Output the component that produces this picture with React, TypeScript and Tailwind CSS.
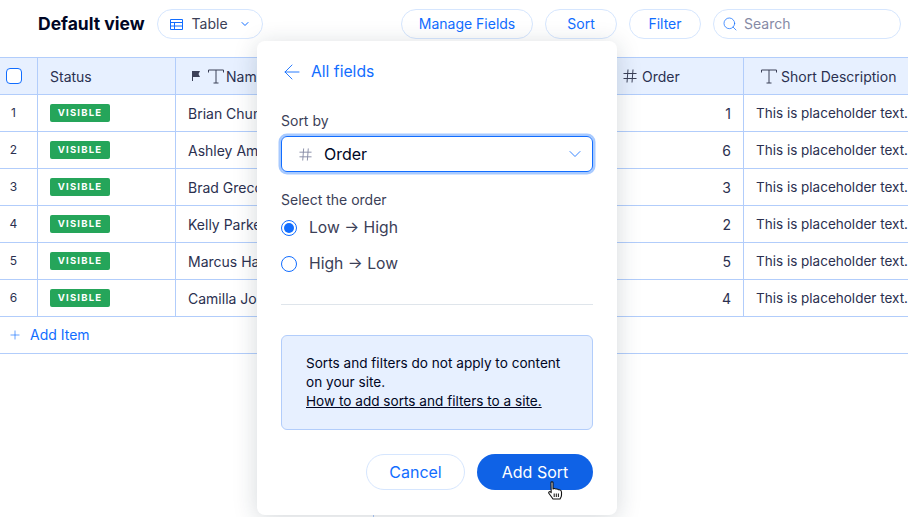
import React from "react";
import { ChevronDown, Search, ArrowLeft, Plus } from "lucide-react";

const rows = [
  ["1", "Brian Chung", "1"],
  ["2", "Ashley Amber", "6"],
  ["3", "Brad Greco", "3"],
  ["4", "Kelly Parker", "2"],
  ["5", "Marcus Hall", "5"],
  ["6", "Camilla Jones", "4"],
];

const font = { fontFamily: "Inter, 'Noto Sans', sans-serif" };

function TIcon() {
  return (
    <svg width="16" height="15" viewBox="0 0 16 15" fill="none" stroke="#3b4057" strokeWidth="1" className="shrink-0">
      <path d="M0.5 3.5V1H15.5V3.5M8 1V14M5.5 14H10.5" />
    </svg>
  );
}

function Hash({ color = "#3b4057", size = 14 }: { color?: string; size?: number }) {
  return (
    <svg width={size} height={size} viewBox="0 0 14 14" fill="none" stroke={color} strokeWidth="1" className="shrink-0">
      <path d="M0.5 4.5H13.5M0.5 9.5H13.5M5 0.5L4 13.5M10 0.5L9 13.5" />
    </svg>
  );
}

function Pill({ children, w }: { children: React.ReactNode; w: string }) {
  return (
    <button className={`${w} h-[30px] pb-[1px] rounded-full border border-[#d6e6fe] bg-white text-[14px] text-[#116dff] flex items-center justify-center`}>
      {children}
    </button>
  );
}

function Row({ n, name, order }: { n: string; name: string; order: string }) {
  return (
    <div className="flex h-[37px] border-b border-[#b2cdfb] text-[14px] text-[#2b3050] bg-white">
      <div className="w-[38px] shrink-0 border-r border-[#b2cdfb] flex items-center text-[12px]">
        <span className="w-[27px] text-center">{n}</span>
      </div>
      <div className="w-[138px] shrink-0 border-r border-[#b2cdfb] flex items-center pl-[12px]">
        <span className="w-[60px] h-[18px] rounded-[2px] bg-[#25a55a] text-white text-[9.5px] font-bold tracking-[1.2px] flex items-center justify-center">VISIBLE</span>
      </div>
      <div className="w-[198px] shrink-0 border-r border-[#b2cdfb] flex items-center pl-[12px] whitespace-nowrap">{name}</div>
      <div className="w-[237px] shrink-0" />
      <div className="w-[133px] shrink-0 border-r border-[#b2cdfb] flex items-center justify-end pr-[12px]">{order}</div>
      <div className="flex-1 flex items-center pl-[12px] text-[13.5px] whitespace-nowrap overflow-hidden">This is placeholder text.</div>
    </div>
  );
}

export default function App() {
  return (
    <div className="relative w-[908px] h-[517px] overflow-hidden bg-white" style={font}>
      <div className="h-[57px] flex items-start pt-[9px]">
        <div className="flex items-center ml-[38px]">
          <span className="text-[17.5px] font-bold text-[#000624] leading-[30px]">Default view</span>
          <button className="ml-[12px] w-[106px] h-[30px] rounded-full border border-[#d6e6fe] flex items-center pl-[12px]">
            <svg width="13" height="11" viewBox="0 0 13 11" fill="none" stroke="#116dff" strokeWidth="1" className="shrink-0">
              <path d="M0.5 0.5H12.5V10.5H0.5ZM0.5 3.5H12.5M0.5 7H12.5M4.5 3.5V10.5" />
            </svg>
            <span className="ml-[9px] pb-[1px] text-[14px] text-[#3b4057]">Table</span>
            <ChevronDown size={12} color="#116dff" className="ml-[11px]" />
          </button>
        </div>
        <div className="ml-auto mr-[7px] flex items-center gap-[12px]">
          <Pill w="w-[132px]">Manage Fields</Pill>
          <Pill w="w-[72px]">Sort</Pill>
          <Pill w="w-[72px]">Filter</Pill>
          <div className="w-[188px] h-[30px] rounded-full border border-[#d6e6fe] flex items-center pl-[8px]">
            <Search size={16} color="#116dff" strokeWidth={1.1} />
            <span className="ml-[6px] pb-[1px] text-[14px] text-[#868aa5]">Search</span>
          </div>
        </div>
      </div>

      <div className="border-t border-[#b2cdfb]">
        <div className="flex h-[37px] bg-[#e7f0ff] border-b border-[#b2cdfb] text-[14px] text-[#2b3050]">
          <div className="w-[38px] shrink-0 border-r border-[#b2cdfb] flex items-center pl-[6px]">
            <span className="w-[16px] h-[16px] rounded-[4px] border border-[#116dff] bg-white" />
          </div>
          <div className="w-[138px] shrink-0 border-r border-[#b2cdfb] flex items-center pl-[12px]">Status</div>
          <div className="w-[198px] shrink-0 border-r border-[#b2cdfb] flex items-center pl-[16px] gap-[8px]">
            <svg width="8" height="10" viewBox="0 0 8 10" fill="#3b4057" className="shrink-0"><path d="M0 0H8L6.5 3L8 6H1V10H0Z" /></svg>
            <span className="flex items-center gap-[2px] whitespace-nowrap"><TIcon />Name</span>
          </div>
          <div className="w-[237px] shrink-0" />
          <div className="w-[133px] shrink-0 border-r border-[#b2cdfb] flex items-center pl-[12px] gap-[5px]"><Hash />Order</div>
          <div className="flex-1 flex items-center pl-[17px] gap-[4px] whitespace-nowrap"><TIcon />Short Description</div>
        </div>
        {rows.map((r) => (
          <Row key={r[0]} n={r[0]} name={r[1]} order={r[2]} />
        ))}
        <div className="flex items-center h-[37px] border-b border-[#b2cdfb] pl-[8px] pb-[1px] text-[14px] text-[#116dff]">
          <Plus size={14} strokeWidth={1.1} />
          <span className="ml-[8px]">Add Item</span>
        </div>
        <div className="ml-[373px] w-px h-[170px] bg-[#b2cdfb]" />
      </div>

      <div className="absolute left-[257px] top-[41px] w-[360px] h-[474px] bg-white rounded-[8px] shadow-[0_4px_24px_rgba(22,45,61,0.18)] px-[24px]">
        <div className="flex items-center h-[30px] mt-[15px] pt-[1px] text-[#116dff] text-[15.7px]">
          <ArrowLeft size={24} strokeWidth={0.9} className="-ml-[1px]" />
          <span className="ml-[7px]">All fields</span>
        </div>
        <div className="mt-[26px] text-[14px] leading-[18px] text-[#3b4057]">Sort by</div>
        <div className="mt-[6px] h-[36px] rounded-[6px] border border-[#116dff] shadow-[0_0_0_2.5px_#a8caff] flex items-center pl-[17px] pr-[7px]">
          <Hash color="#868aa5" size={13} />
          <span className="ml-[12px] text-[16px] text-[#000624]">Order</span>
          <ChevronDown size={20} color="#116dff" strokeWidth={1} className="ml-auto" />
        </div>
        <div className="mt-[19px] text-[14px] leading-[18px] text-[#3b4057]">Select the order</div>
        <label className="flex items-center mt-[4px] h-[30px] text-[15.7px] text-[#3b4057]">
          <span className="w-[16px] h-[16px] rounded-full border border-[#116dff] flex items-center justify-center">
            <span className="w-[10px] h-[10px] rounded-full bg-[#116dff]" />
          </span>
          <span className="ml-[12px]">Low → High</span>
        </label>
        <label className="flex items-center mt-[6px] h-[30px] text-[15.7px] text-[#3b4057]">
          <span className="w-[16px] h-[16px] rounded-full border border-[#116dff]" />
          <span className="ml-[12px]">High → Low</span>
        </label>
        <div className="mt-[25px] h-px bg-[#dfe5eb]" />
        <div className="mt-[30px] h-[95px] rounded-[6px] bg-[#e7f0ff] border border-[#b2cdfb] px-[24px] pt-[18px] text-[13.6px] leading-[19px] text-[#000624]">
          <div>Sorts and filters do not apply to content on your site.</div>
          <div className="underline whitespace-nowrap">How to add sorts and filters to a site.</div>
        </div>
        <div className="mt-[24px] flex justify-end gap-[12px]">
          <button className="w-[99px] h-[36px] rounded-full border border-[#d6e6fe] bg-white text-[#116dff] text-[16px]">Cancel</button>
          <button className="w-[116px] h-[36px] rounded-full bg-[#0f62e6] text-white text-[16px]">Add Sort</button>
        </div>
      </div>

      <svg className="absolute left-[547px] top-[481px]" width="18" height="20" viewBox="0 0 18 20">
        <path d="M4 1.5C4 0.6 6 0.6 6 1.5V8L7 7.6C8 7.3 8.6 8 8.8 8L10 8C10.7 8 11 8.5 11.2 8.6L12.4 8.8C13.4 9 14.5 9.8 14.5 11V14C14.5 16 13.5 17 13 18H6C5 16.5 3.5 14.5 2 12.5C1 11.2 2.6 10 3.8 11.2L4.2 11.6Z" fill="#fff" stroke="#111" strokeWidth="1.1" strokeLinejoin="round" />
        <path d="M7.2 12.5V16M9.3 12.5V16M11.4 12.5V16" stroke="#111" strokeWidth="1" />
      </svg>
    </div>
  );
}
